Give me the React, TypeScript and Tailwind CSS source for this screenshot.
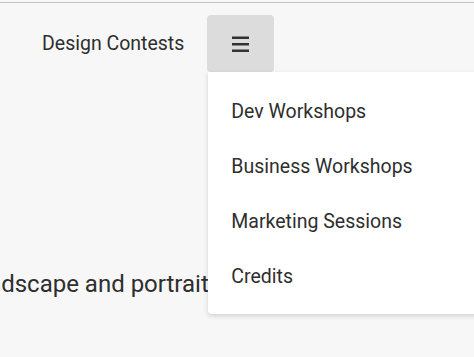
import React from 'react';

const MENU_ITEMS = ['Dev Workshops', 'Business Workshops', 'Marketing Sessions', 'Credits'];

const App: React.FC = () => {
  return (
    <div
      className="relative w-full h-[357px] overflow-hidden bg-[#f7f7f7] text-[#2e2e2e] pt-[2px]"
      style={{ fontFamily: 'Roboto, "Noto Sans", sans-serif' }}
    >
      <div className="border-t border-[#c2c2c2]">
        {/* Top navigation */}
        <nav className="flex items-center pl-[17px] pt-[12px]">
          <a className="flex items-center h-[57px] pl-[25px] pr-[23px] text-[19.5px]">Design Contests</a>
          <div className="relative">
            <button className="flex items-center justify-center w-[67px] h-[57px] rounded bg-[#dcdcdc]">
              <svg width="17" height="16" viewBox="0 0 17 16">
                <rect x="0" y="0.5" width="17" height="2.5" fill="#333" />
                <rect x="0" y="7" width="17" height="2.5" fill="#333" />
                <rect x="0" y="13.5" width="17" height="2.5" fill="#333" />
              </svg>
            </button>

            {/* Dropdown */}
            <div className="absolute top-full left-[1px] z-10 w-[300px] pt-[12px] pb-[10px] bg-white rounded-b shadow-[0_2px_5px_rgba(0,0,0,0.16)]">
              {MENU_ITEMS.map((item) => (
                <div key={item} className="flex items-center h-[55px] pl-[23px] pr-6 text-[19.5px]">
                  {item}
                </div>
              ))}
            </div>
          </div>
        </nav>

        <p className="mt-[194px] -ml-[31px] whitespace-nowrap text-[24px] leading-[36px]">
          landscape and portrait modes
        </p>
      </div>
    </div>
  );
};

export default App;
